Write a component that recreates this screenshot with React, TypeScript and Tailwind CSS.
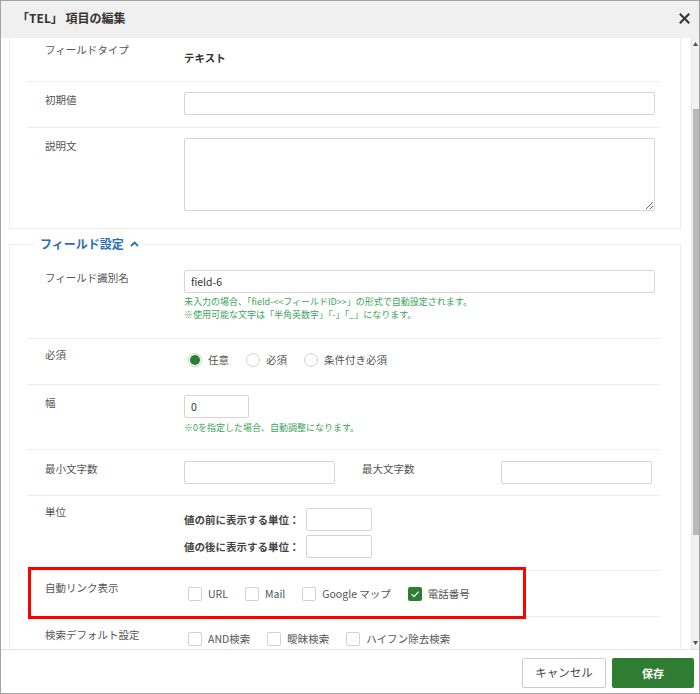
import React from "react";

function Radio({ checked, label }: { checked?: boolean; label: string }) {
  return (
    <div className="flex items-center gap-[6px] h-[14px]">
      {checked ? (
        <span className="w-[14px] h-[14px] rounded-full border border-[#b9d6ba] bg-white flex items-center justify-center">
          <span className="w-[10px] h-[10px] rounded-full bg-[#2e7d32]" />
        </span>
      ) : (
        <span className="w-[14px] h-[14px] rounded-full border border-[#d2d2d2] bg-white" />
      )}
      <span className="leading-[14px]">{label}</span>
    </div>
  );
}

function Check({ checked, label }: { checked?: boolean; label: string }) {
  return (
    <div className="flex items-center gap-[6px] h-[14px]">
      {checked ? (
        <span className="w-[14px] h-[14px] rounded-[2px] bg-[#2e7d32] flex items-center justify-center">
          <svg width="10" height="10" viewBox="0 0 10 10">
            <polyline points="1.6,5.2 4,7.6 8.6,2.6" fill="none" stroke="#ffffff" strokeWidth="1.2" />
          </svg>
        </span>
      ) : (
        <span className="w-[14px] h-[14px] rounded-[2px] border border-[#d2d2d2] bg-white" />
      )}
      <span className="leading-[14px]">{label}</span>
    </div>
  );
}

export default function App() {
  return (
    <div className="w-[700px] h-[694px] border border-[#a3a3a3] bg-white flex flex-col overflow-hidden text-[10.5px] text-[#555] [font-family:'Noto_Sans_CJK_JP','Noto_Sans',sans-serif]">
      {/* header */}
      <div className="h-[37px] shrink-0 bg-[#f0f0f0] flex items-start justify-between pl-[16px] pr-[9px] pt-[9px]">
        <span className="text-[12px] leading-[16px] font-bold text-[#333]">「TEL」 項目の編集</span>
        <svg width="11" height="11" viewBox="0 0 11 11" className="mt-[3px]">
          <path d="M1.5 1.5 L9.5 9.5 M9.5 1.5 L1.5 9.5" stroke="#333" strokeWidth="2" strokeLinecap="square" />
        </svg>
      </div>

      {/* body */}
      <div className="flex h-[611px] shrink-0">
        <div className="flex-1 overflow-hidden pl-[8px] pr-[10px]">
          <fieldset className="border border-t-0 border-[#ececec] pl-[17px] pr-[20px] pb-[17px]">
            <div className="h-[44px] border-b border-[#eeeeee] flex">
              <div className="w-[157px] pl-[18px] pt-[4px] leading-[16px]">フィールドタイプ</div>
              <div className="pt-[12px] leading-[16px] font-bold text-[#333]">テキスト</div>
            </div>
            <div className="flex pt-[10px] pb-[12px] border-b border-[#eeeeee]">
              <div className="w-[157px] pl-[18px] leading-[16px]">初期値</div>
              <div className="flex-1 pr-[5px]">
                <div className="h-[23px] border border-[#d5d5d5] rounded-[2px] bg-white" />
              </div>
            </div>
            <div className="flex pt-[10px]">
              <div className="w-[157px] pl-[18px] leading-[16px]">説明文</div>
              <div className="flex-1 pr-[5px]">
                <textarea className="block w-full h-[73px] border border-[#d5d5d5] rounded-[2px] bg-white outline-none" />
              </div>
            </div>
          </fieldset>

          <fieldset className="mt-[6px] border border-[#ececec] pl-[17px] pr-[20px]">
            <legend className="ml-[8px] px-[5px] leading-[18px] text-[12px] font-bold text-[#2a6ebb] flex items-center gap-[6px]">
              <span>フィールド設定</span>
              <svg width="9" height="6" viewBox="0 0 9 6">
                <polyline points="1,5 4.5,1.5 8,5" fill="none" stroke="#2a6ebb" strokeWidth="1.8" />
              </svg>
            </legend>

            {/* 識別名 */}
            <div className="flex pt-[17px] pb-[17px] border-b border-[#eeeeee]">
              <div className="w-[157px] pl-[18px] leading-[16px]">フィールド識別名</div>
              <div className="flex-1 pr-[5px]">
                <div className="h-[23px] border border-[#d5d5d5] rounded-[2px] bg-white flex items-center pl-[6px] text-[#333]">field-6</div>
                <div className="mt-[2px] text-[9px] leading-[13px] text-[#3ca35c]">
                  <div>未入力の場合、「field-&lt;&lt;フィールドID&gt;&gt;」の形式で自動設定されます。</div>
                  <div>※使用可能な文字は「半角英数字」「-」「_」になります。</div>
                </div>
              </div>
            </div>

            {/* 必須 */}
            <div className="flex pt-[8px] pb-[17px] border-b border-[#eeeeee]">
              <div className="w-[157px] pl-[18px] leading-[16px]">必須</div>
              <div className="flex-1 pt-[6px] pl-[4px] flex gap-[17px]">
                <Radio checked label="任意" />
                <Radio label="必須" />
                <Radio label="条件付き必須" />
              </div>
            </div>

            {/* 幅 */}
            <div className="flex pt-[10px] pb-[15px] border-b border-[#eeeeee]">
              <div className="w-[157px] pl-[18px] leading-[16px]">幅</div>
              <div className="flex-1 pr-[5px]">
                <div className="w-[65px] h-[23px] border border-[#d5d5d5] rounded-[2px] bg-white flex items-center pl-[6px] text-[#333]">0</div>
                <div className="mt-[3px] text-[9px] leading-[13px] text-[#3ca35c]">※0を指定した場合、自動調整になります。</div>
              </div>
            </div>

            {/* 文字数 */}
            <div className="flex pt-[11px] pb-[11px] border-b border-[#eeeeee]">
              <div className="w-[157px] pl-[18px] leading-[16px]">最小文字数</div>
              <div className="flex-1 flex">
                <div className="w-[151px] h-[23px] border border-[#d5d5d5] rounded-[2px] bg-white" />
                <div className="ml-[27px] w-[139px] leading-[16px]">最大文字数</div>
                <div className="w-[151px] h-[23px] border border-[#d5d5d5] rounded-[2px] bg-white" />
              </div>
            </div>

            {/* 単位 */}
            <div className="flex pt-[12px] pb-[12px] border-b border-[#eeeeee]">
              <div className="w-[157px] pl-[18px] leading-[16px] -mt-[4px]">単位</div>
              <div className="flex-1 flex flex-col gap-[4px]">
                <div className="flex items-center">
                  <span className="w-[122px] font-bold text-[#444]">値の前に表示する単位：</span>
                  <div className="w-[66px] h-[23px] border border-[#d5d5d5] rounded-[2px] bg-white" />
                </div>
                <div className="flex items-center">
                  <span className="w-[122px] font-bold text-[#444]">値の後に表示する単位：</span>
                  <div className="w-[66px] h-[23px] border border-[#d5d5d5] rounded-[2px] bg-white" />
                </div>
              </div>
            </div>

            {/* 自動リンク */}
            <div className="relative flex pt-[9px] pb-[15px] border-b border-[#eeeeee]">
              <div className="w-[157px] pl-[18px] leading-[16px]">自動リンク表示</div>
              <div className="flex-1 pt-[7px] pl-[4px] flex gap-[17px]">
                <Check label="URL" />
                <Check label="Mail" />
                <Check label="Google マップ" />
                <Check checked label="電話番号" />
              </div>
              <div className="absolute top-[-4px] left-[1px] w-[498px] h-[52px] border-[3px] border-[#ff0000] z-10" />
            </div>

            {/* 検索 */}
            <div className="flex pt-[10px] pb-[15px]">
              <div className="w-[157px] pl-[18px] leading-[16px]">検索デフォルト設定</div>
              <div className="flex-1 pt-[5px] pl-[4px] flex gap-[17px]">
                <Check label="AND検索" />
                <Check label="曖昧検索" />
                <Check label="ハイフン除去検索" />
              </div>
            </div>
          </fieldset>
        </div>

        {/* scrollbar */}
        <div className="w-[8px] shrink-0 bg-[#f1f1f1] border-l border-[#e4e4e4] flex flex-col items-center">
          <div className="h-[12px] flex items-center justify-center">
            <svg width="5" height="4" viewBox="0 0 5 4"><polygon points="2.5,0 5,4 0,4" fill="#505050" /></svg>
          </div>
          <div className="mt-[59px] w-[6px] h-[426px] bg-[#b9b9b9]" />
          <div className="flex-1" />
          <div className="h-[12px] flex items-center justify-center">
            <svg width="5" height="4" viewBox="0 0 5 4"><polygon points="0,0 5,0 2.5,4" fill="#505050" /></svg>
          </div>
        </div>
      </div>

      {/* footer */}
      <div className="h-[44px] shrink-0 border-t border-[#e5e5e5] flex justify-end items-start pt-[8px] pr-[5px] gap-[6px]">
        <button className="w-[84px] h-[30px] border border-[#cccccc] rounded-[2px] bg-white text-[11.5px] text-[#444]">キャンセル</button>
        <button className="w-[82px] h-[30px] rounded-[2px] bg-[#2e7d32] text-[11px] font-bold text-white">保存</button>
      </div>
    </div>
  );
}
